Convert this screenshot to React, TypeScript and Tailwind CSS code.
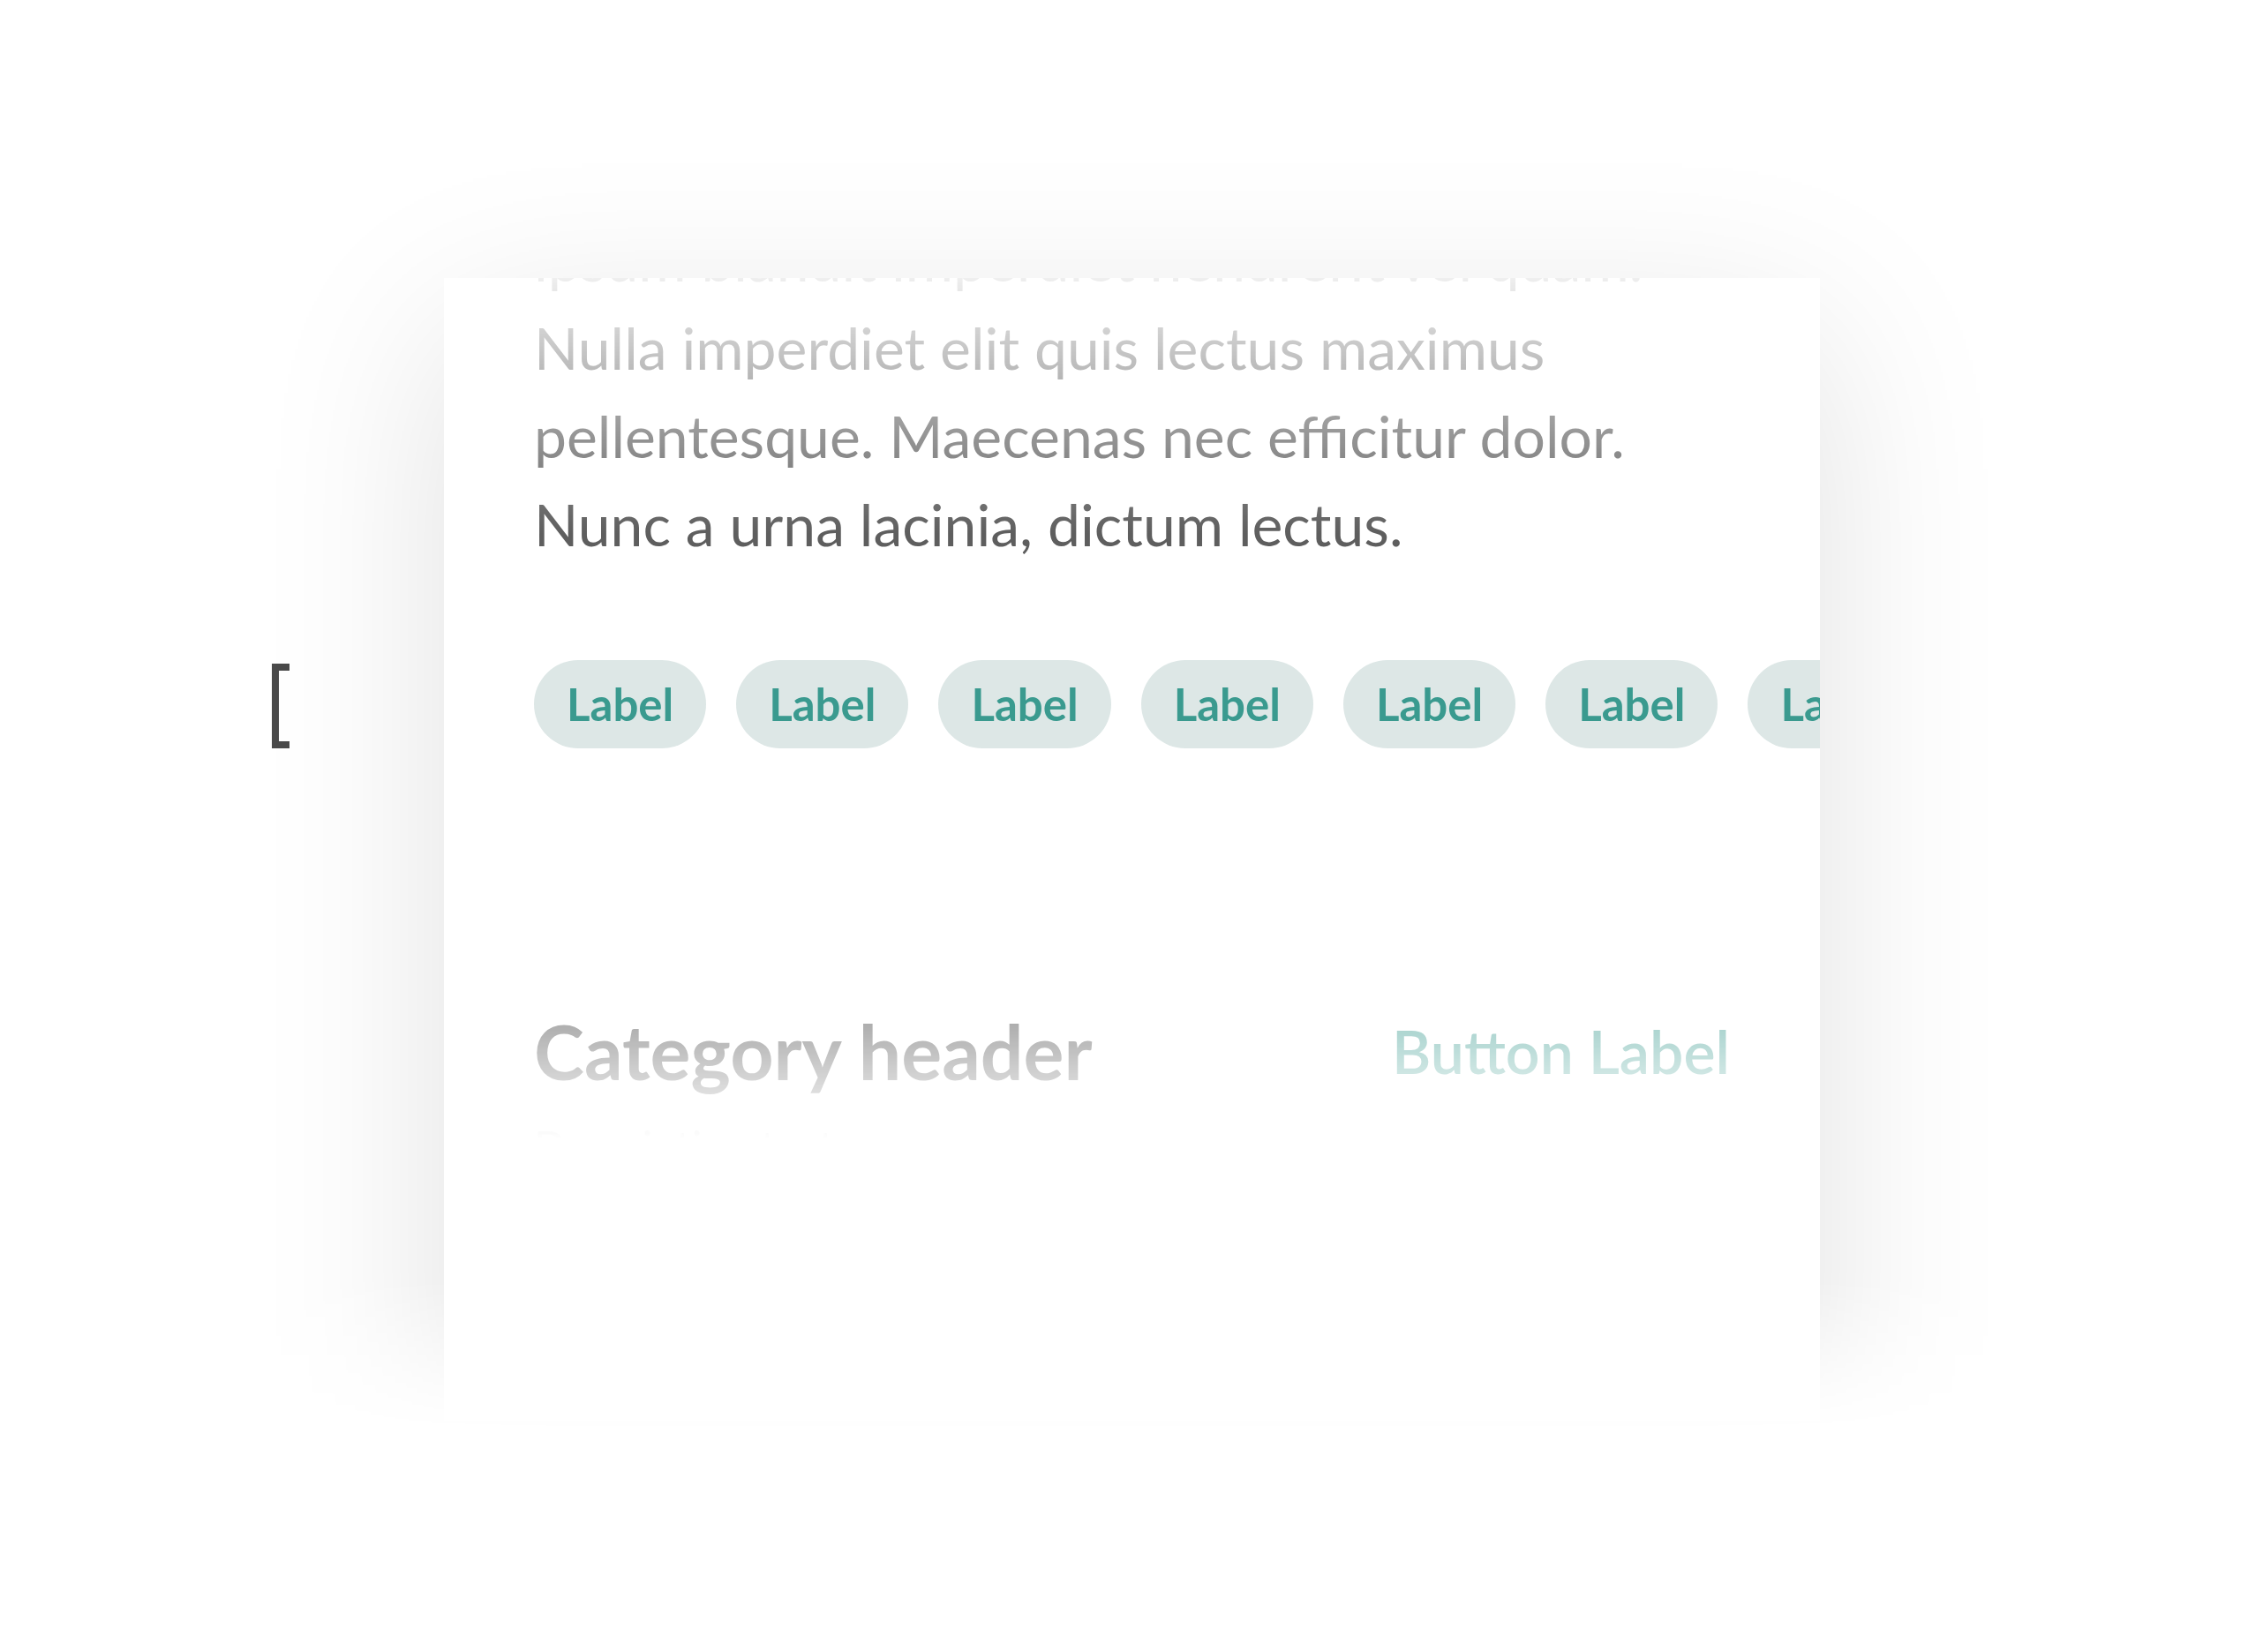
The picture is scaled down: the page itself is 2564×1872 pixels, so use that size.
import React from "react";

const chips = ["Label", "Label", "Label", "Label", "Label", "Label", "Label"];

export default function App() {
  return (
    <div className="relative w-full h-[1872px] bg-white overflow-hidden font-['Lato','Noto_Sans',sans-serif]">
      <div className="absolute left-[308px] top-[752px] w-[20px] h-[96px] border-l-[8px] border-y-[8px] border-r-0 border-solid border-[#4a4a4a]" />
      <div className="ml-[303px] mt-[115px] p-[200px] w-fit [mask-image:linear-gradient(to_bottom,black_0px,black_1335px,transparent_1505px)]">
        <div className="w-[1559px] h-[1295px] bg-white overflow-hidden shadow-[0_60px_200px_rgba(0,0,0,0.12)]">
          <div className="flex flex-col h-full px-[102px] [mask-image:linear-gradient(to_bottom,rgba(0,0,0,0.1)_0px,black_290px,black_676px,transparent_976px)]">
            <p className="-mt-[71px] text-[66px] leading-[100px] text-[#5e5e5e] whitespace-nowrap">
              <span className="block">ipsum blandit imperdiet hendrerit vel quam.</span>
              <span className="block">Nulla imperdiet elit quis lectus maximus</span>
              <span className="block">pellentesque. Maecenas nec efficitur dolor.</span>
              <span className="block">Nunc a urna lacinia, dictum lectus.</span>
            </p>
            <div className="mt-[104px] flex gap-[34px]">
              {chips.map((c, i) => (
                <div
                  key={i}
                  className="shrink-0 h-[100px] px-[37px] rounded-full bg-[#dde7e6] text-[#3a9a8f] font-bold text-[51px] flex items-center"
                >
                  {c}
                </div>
              ))}
            </div>
            <div className="mt-[291px] flex items-center justify-between">
              <h2 className="text-[86px] leading-[1.2] font-bold text-[#444]">Category header</h2>
              <button className="text-[68px] leading-[1.2] font-semibold text-[#3a9a8f]">Button Label</button>
            </div>
            <p className="mt-[28px] text-[48px] leading-[1.2] text-[#666]">Description text</p>
          </div>
        </div>
      </div>
    </div>
  );
}
